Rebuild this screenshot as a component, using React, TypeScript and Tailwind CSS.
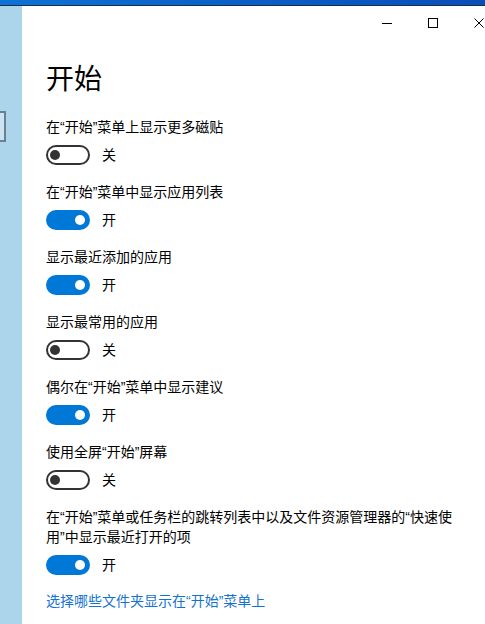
import React from "react";

const font = { fontFamily: '"Liberation Sans", "Noto Sans CJK SC", sans-serif' };

function Toggle({ on }: { on: boolean }) {
  if (on) {
    return (
      <div className="flex h-[20px] w-[44px] items-center justify-end rounded-full bg-[#0078d7] px-[5px]">
        <div className="h-[10px] w-[10px] rounded-full bg-white" />
      </div>
    );
  }
  return (
    <div className="flex h-[20px] w-[44px] items-center rounded-full border-2 border-[#333333] bg-white px-[2px]">
      <div className="h-[10px] w-[10px] rounded-full bg-[#333333]" />
    </div>
  );
}

function Item({ label, on }: { label: React.ReactNode; on: boolean }) {
  return (
    <div className="mb-[17px] flex flex-col">
      <div className="w-[414px] text-[14px] leading-[20px] text-black">{label}</div>
      <div className="mt-[8px] flex items-center gap-[12px]">
        <Toggle on={on} />
        <span className="text-[14px] leading-[20px] text-black">{on ? "开" : "关"}</span>
      </div>
    </div>
  );
}

export default function App() {
  return (
    <div className="flex h-[624px] w-[485px] flex-col overflow-hidden bg-white" style={font}>
      <div className="h-[6px] w-full border-b border-[#1a2e48] bg-gradient-to-r from-[#0e72d6] to-[#0a4db9]" />
      <div className="flex flex-1">
        <div className="flex w-[22px] flex-col bg-[#acd4eb] pt-[105px]">
          <div className="h-[31px] w-[6px] border-y-2 border-r-2 border-[#6a808f] bg-[#cbe4f2]" />
        </div>
        <div className="flex flex-1 flex-col overflow-hidden">
          <div className="mr-[-17px] flex h-[34px] justify-end">
            <div className="flex w-[46px] items-center justify-center">
              <div className="h-[1px] w-[10px] bg-black" />
            </div>
            <div className="flex w-[46px] items-center justify-center">
              <div className="h-[10px] w-[10px] border border-black" />
            </div>
            <div className="flex w-[46px] items-center justify-center">
              <svg width="10" height="10" viewBox="0 0 10 10">
                <path d="M0.5 0.5 L9.5 9.5 M9.5 0.5 L0.5 9.5" stroke="black" strokeWidth="1" fill="none" />
              </svg>
            </div>
          </div>
          <div className="flex flex-col pl-[24px] pt-[20px]">
            <h1 className="mb-[17px] text-[28px] leading-[40px] text-black">开始</h1>
            <Item label="在“开始”菜单上显示更多磁贴" on={false} />
            <Item label="在“开始”菜单中显示应用列表" on={true} />
            <Item label="显示最近添加的应用" on={true} />
            <Item label="显示最常用的应用" on={false} />
            <Item label="偶尔在“开始”菜单中显示建议" on={true} />
            <Item label="使用全屏“开始”屏幕" on={false} />
            <Item
              label="在“开始”菜单或任务栏的跳转列表中以及文件资源管理器的“快速使用”中显示最近打开的项"
              on={true}
            />
            <a className="-mt-[1px] text-[14px] leading-[20px] text-[#1473cf]">选择哪些文件夹显示在“开始”菜单上</a>
          </div>
        </div>
      </div>
    </div>
  );
}
